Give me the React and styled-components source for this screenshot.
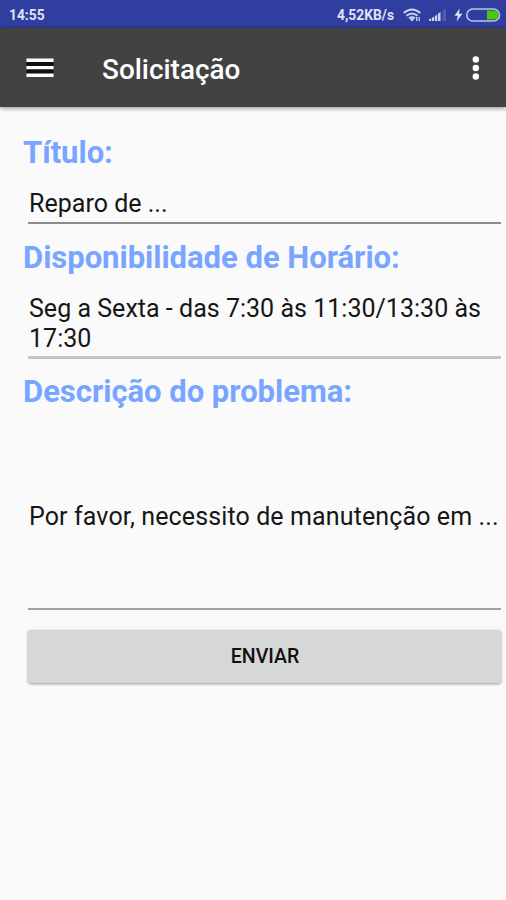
import React from 'react';
import styled, { createGlobalStyle } from 'styled-components';

const GlobalStyle = createGlobalStyle`
  * {
    box-sizing: border-box;
  }

  body {
    margin: 0;
    background: #fafafa;
    font-family: Roboto, sans-serif;
  }
`;

const Screen = styled.div`
  width: 506px;
  height: 900px;
  display: flex;
  flex-direction: column;
  background: #fafafa;
  overflow: hidden;
`;

const StatusBar = styled.div`
  height: 28px;
  flex-shrink: 0;
  display: flex;
  align-items: center;
  justify-content: space-between;
  padding: 1px 5px 0 9px;
  background: #303f9f;
  color: #dfe2f5;
  font-size: 13.8px;
  font-weight: 700;
`;

const StatusGroup = styled.div`
  display: flex;
  align-items: center;

  svg {
    display: block;
  }
`;

const NetworkSpeed = styled.span`
  margin-right: 9px;
`;

const StatusIcons = styled.div`
  display: grid;
  grid-template-columns: 26px 25px 12px 35px;
  align-items: center;
`;

const Toolbar = styled.header`
  height: 79px;
  flex-shrink: 0;
  display: flex;
  align-items: center;
  padding: 1px 20px 0 26px;
  background: #424242;
  box-shadow: 0 1px 5px rgba(0, 0, 0, 0.45);
`;

const IconButton = styled.button`
  display: flex;
  padding: 0;
  border: 0;
  background: transparent;
  color: #fff;
  cursor: pointer;
`;

const Title = styled.h1`
  flex: 1;
  margin: 2px 0 0 48px;
  color: #fff;
  font-size: 27.9px;
  font-weight: 500;
  line-height: 33px;
`;

const Form = styled.form`
  display: flex;
  flex-direction: column;
  padding: 27px 5px 0 23px;
`;

const Label = styled.label`
  height: 35px;
  color: #78a5ff;
  font-size: 31px;
  font-weight: 700;
  line-height: 37px;
  letter-spacing: -0.02px;
`;

const Field = styled.div`
  display: flex;
  align-items: center;
  height: ${props => props.$height}px;
  margin: 0 0 ${props => props.$gap}px 5px;
  padding: ${props => props.$top}px 0 0 1px;
  border-bottom: ${props => props.$line || '2px solid #8c8c8c'};
  color: #161616;
  font-size: 25px;
  line-height: 29.5px;
  letter-spacing: ${props => props.$spacing || '0.02px'};
  white-space: ${props => (props.$nowrap ? 'nowrap' : 'normal')};
`;

const SubmitButton = styled.button`
  height: 53px;
  margin: 0 0 0 5px;
  padding: 0 0 0 1px;
  border: 0;
  border-radius: 3px;
  background: #d6d8d7;
  box-shadow: 0 1px 3px rgba(0, 0, 0, 0.4);
  color: #111;
  font-family: inherit;
  font-size: 19.5px;
  font-weight: 500;
  text-transform: uppercase;
  cursor: pointer;
`;

const WifiIcon = () => (
  <svg width="18" height="14" viewBox="0 0 18 14" fill="none" stroke="#cfd4f0" strokeWidth="1.8">
    <path d="M.8 5Q9 -2 17.2 5M3.5 7.8Q9 3.4 14.5 7.8M6 10.3Q9 8.2 12 10.3" />
    <path d="M9 13.5L6.8 10.9Q9 9.6 11.2 10.9Z" fill="#cfd4f0" stroke="none" />
    <path d="M13.7 9V13M16.2 9V13" strokeWidth="1.3" />
  </svg>
);

const SignalIcon = () => (
  <svg width="18" height="14" viewBox="0 0 18 14" fill="#cfd4f0">
    <path d="M0 13V11.5L2.2 10.3V13ZM3 13V9.8L5.2 8.5V13ZM6 13V8L8.2 6.5V13ZM9 13V5.8L11.5 4V13Z" />
    <path d="M13.5 13V2.8L17 .5V13Z" opacity="0.2" />
  </svg>
);

const BoltIcon = () => (
  <svg width="9" height="14" viewBox="0 0 9 14" fill="#dfe2f5">
    <path d="M5.6 .5L.5 7.7H3.8L2.6 13.5L8.5 5.8H5Z" />
  </svg>
);

const BatteryIcon = () => (
  <svg width="35" height="14" viewBox="0 0 35 14">
    <rect x=".8" y="1" width="32.7" height="12" rx="6" fill="none" stroke="#bcc3e8" strokeWidth="1.6" />
    <path d="M21 2.5H28a4.5 4.5 0 0 1 0 9H21Z" fill="#46c80f" />
  </svg>
);

const MenuIcon = () => (
  <svg width="28" height="20" viewBox="0 0 28 20">
    <path d="M.5 4H27.5V8H.5ZM.5 11H27.5V16H.5Z" fill="#111" />
    <path d="M.5 .6H27.5V4H.5ZM.5 8H27.5V11.2H.5ZM.5 15.5H27.5V19H.5Z" fill="#fff" />
  </svg>
);

const MoreIcon = () => (
  <svg width="20" height="26" viewBox="0 0 20 26" fill="#fff">
    <circle cx="9.8" cy="4.5" r="3.2" />
    <circle cx="9.8" cy="13" r="3.2" />
    <circle cx="9.8" cy="21.5" r="3.2" />
  </svg>
);

const App = () => (
  <>
    <GlobalStyle />
    <Screen>
      <StatusBar>
        <span>14:55</span>
        <StatusGroup>
          <NetworkSpeed>4,52KB/s</NetworkSpeed>
          <StatusIcons>
            <WifiIcon />
            <SignalIcon />
            <BoltIcon />
            <BatteryIcon />
          </StatusIcons>
        </StatusGroup>
      </StatusBar>

      <Toolbar>
        <IconButton aria-label="Menu">
          <MenuIcon />
        </IconButton>
        <Title>Solicitação</Title>
        <IconButton aria-label="Mais opções">
          <MoreIcon />
        </IconButton>
      </Toolbar>

      <Form onSubmit={e => e.preventDefault()}>
        <Label>Título:</Label>
        <Field $height={55} $top={17} $gap={15}>
          Reparo de ...
        </Field>
        <Label>Disponibilidade de Horário:</Label>
        <Field $height={85} $top={17} $gap={14} $line="3px solid #c4c4c4">
          Seg a Sexta - das 7:30 às 11:30/13:30 às 17:30
        </Field>
        <Label>Descrição do problema:</Label>
        <Field $height={202} $top={18} $gap={20} $line="2px solid #a0a0a0" $spacing="0.12px" $nowrap>
          Por favor, necessito de manutenção em ...
        </Field>
        <SubmitButton>Enviar</SubmitButton>
      </Form>
    </Screen>
  </>
);

export default App;
